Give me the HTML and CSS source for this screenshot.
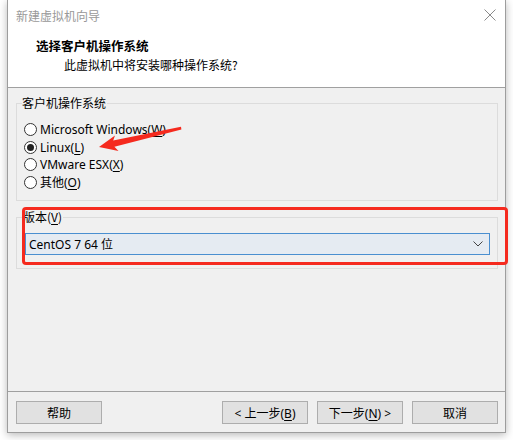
FILE: index.html
```html
<!DOCTYPE html>
<html lang="zh-CN">
<head>
<meta charset="utf-8">
<title>新建虚拟机向导</title>
<link rel="stylesheet" href="styles.css">
</head>
<body>
<div class="window">
  <div class="header">
    <div class="titlebar">
      <span class="title">新建虚拟机向导</span>
      <svg class="close" width="12" height="12" viewBox="0 0 12 12"><path d="M0.5 0.5 L11.5 11.5 M11.5 0.5 L0.5 11.5" stroke="#8a8a8a" stroke-width="1" fill="none"/></svg>
    </div>
    <div class="h-title">选择客户机操作系统</div>
    <div class="h-sub">此虚拟机中将安装哪种操作系统?</div>
  </div>
  <div class="body">
    <div class="group g-os">
      <span class="legend">客户机操作系统</span>
      <div class="radio"><span class="circle"></span><span>Microsoft Windows(<u>W</u>)</span></div>
      <div class="radio"><span class="circle checked"></span><span>Linux(<u>L</u>)</span></div>
      <div class="radio"><span class="circle"></span><span>VMware ESX(<u>X</u>)</span></div>
      <div class="radio"><span class="circle"></span><span>其他(<u>O</u>)</span></div>
    </div>
    <div class="group g-ver">
      <span class="legend">版本(<u>V</u>)</span>
      <div class="combo">
        <span>CentOS 7 64 位</span>
        <svg class="chev" width="10" height="6" viewBox="0 0 10 6"><path d="M0.5 0.5 L5 5 L9.5 0.5" stroke="#444" stroke-width="1" fill="none"/></svg>
      </div>
    </div>
  </div>
  <div class="footer">
    <button class="btn">帮助</button>
    <span class="spacer"></span>
    <button class="btn">&lt; 上一步(<u>B</u>)</button>
    <button class="btn">下一步(<u>N</u>) &gt;</button>
    <button class="btn">取消</button>
  </div>
  <div class="redbox"></div>
  <svg class="arrow" width="513" height="440" viewBox="0 0 513 440"><polygon points="99,147 115,135.5 113.2,140.6 181,126.8 181.4,129.4 114.4,146.8 118.5,151" fill="#f52a1e"/></svg>
</div>
</body>
</html>
```
FILE: styles.css
```css
* { box-sizing: border-box; }
html, body { margin: 0; padding: 0; background: #ffffff; }
body {
  font-family: "Noto Sans", "Noto Sans CJK SC", sans-serif;
  font-size: 12px;
  color: #000;
  width: 513px;
  height: 440px;
  overflow: hidden;
}
.window {
  margin-left: 7px;
  width: 499px;
  height: 433px;
  border: 1px solid #9d9d9d;
  border-top: none;
  background: #f0f0f0;
  display: flex;
  flex-direction: column;
  position: relative;
  box-shadow: 0 2px 8px rgba(0,0,0,0.28);
}
.header {
  height: 88px;
  background: #fff;
  border-bottom: 1px solid #a0a0a0;
  flex: none;
}
.titlebar {
  height: 31px;
  display: flex;
  align-items: center;
  justify-content: space-between;
  padding: 0 9px 0 8px;
  font-family: "Noto Sans CJK SC", sans-serif;
}
.title { color: #999; line-height: 16px; }
.close { display: block; margin-top: -1px; }
.h-title {
  font-family: "Noto Sans CJK SC", sans-serif;
  font-weight: bold;
  padding-left: 28px;
  line-height: 16px;
  margin-top: 7px;
  font-size: 12.5px;
}
.h-sub {
  font-family: "Noto Sans CJK SC", sans-serif;
  padding-left: 56px;
  line-height: 16px;
  margin-top: 3px;
}
.body {
  flex: 1;
  padding: 15px 7px 0 8px;
}
.group {
  position: relative;
  border: 1px solid #dcdcdc;
}
.legend {
  position: absolute;
  top: -9px;
  left: 5px;
  background: #f0f0f0;
  padding: 0 1px 0 0;
  line-height: 16px;
  font-family: "Noto Sans CJK SC", sans-serif;
}
.g-ver .legend { left: 6px; }
.g-os { height: 98px; padding-top: 17px; }
.radio {
  display: flex;
  align-items: center;
  height: 17.5px;
  padding-left: 7px;
  white-space: nowrap;
}
.circle {
  width: 13px;
  height: 13px;
  border: 1px solid #333;
  border-radius: 50%;
  background: #fff;
  margin-right: 3px;
  flex: none;
  display: flex;
  align-items: center;
  justify-content: center;
}
.circle.checked::after {
  content: "";
  width: 7px;
  height: 7px;
  border-radius: 50%;
  background: #222;
}
.g-ver { margin-top: 16px; height: 52px; padding: 15px 7px 0 8px; }
.combo {
  height: 22px;
  border: 1px solid #4a8fd0;
  background: #e5ebf2;
  display: flex;
  align-items: center;
  justify-content: space-between;
  padding: 0 6px 0 3px;
}
.chev { display: block; }
.footer {
  height: 41px;
  flex: none;
  border-top: 1px solid #a0a0a0;
  display: flex;
  align-items: flex-start;
  gap: 9px;
  padding: 9px 7px 0 8px;
}
.spacer { flex: 1; }
.btn {
  width: 86px;
  height: 23px;
  border: 1px solid #adadad;
  background: #e1e1e1;
  font-family: "Noto Sans", "Noto Sans CJK SC", sans-serif;
  font-size: 12px;
  color: #000;
  padding: 0;
  margin: 0;
}
u { text-underline-offset: 2px; }
.redbox {
  position: absolute;
  left: 14px;
  top: 207px;
  width: 486px;
  height: 58px;
  border: 3px solid #f52a1e;
  border-radius: 4px;
}
.arrow {
  position: absolute;
  left: -8px;
  top: 0;
  pointer-events: none;
}
```
